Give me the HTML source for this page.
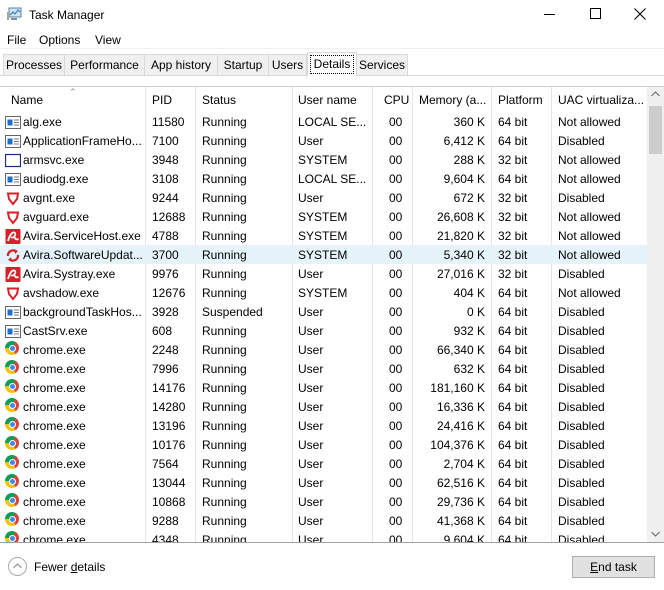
<!DOCTYPE html>
<html><head><meta charset="utf-8"><style>
*{margin:0;padding:0;box-sizing:border-box}
body{width:664px;height:590px;background:#fff;font-family:"Liberation Sans",sans-serif;font-size:12px;color:#000;position:relative;overflow:hidden}
.a{position:absolute;white-space:nowrap}
.tab{position:absolute;top:54px;height:21px;background:#f0f0f0;border:1px solid #d9d9d9;border-bottom:none;font-size:12px;line-height:20px;text-align:center}
.row{position:absolute;left:0;width:647px;height:19px;line-height:19px}
.row span{position:absolute;top:0}
.ic{position:absolute;left:5px;top:2px;width:16px;height:15px}
.vl{position:absolute;top:87px;width:1px;height:455px;background:#e5e5e5}
</style></head><body>
<svg class="a" style="left:6px;top:6px" width="16" height="16" viewBox="0 0 16 16"><rect x="3" y="2" width="12" height="9" fill="#cfe3f3" stroke="#5b7fa6"/><polyline points="4,9 7,6 9,8 12,4 14,6" fill="none" stroke="#2a6fb0"/><rect x="1" y="6" width="2" height="8" fill="#9aa"/><rect x="5" y="12" width="6" height="2" fill="#889"/></svg>
<div class="a" style="left:29px;top:8px;font-size:12px">Task Manager</div>
<div class="a" style="left:544px;top:14px;width:11px;height:1px;background:#000"></div>
<div class="a" style="left:590px;top:8px;width:11px;height:11px;border:1px solid #000"></div>
<svg class="a" style="left:634px;top:8px" width="12" height="12"><path d="M0.5 0.5L11.5 11.5M11.5 0.5L0.5 11.5" stroke="#000" stroke-width="1.1"/></svg>
<div class="a" style="left:7px;top:33px">File</div>
<div class="a" style="left:39px;top:33px">Options</div>
<div class="a" style="left:95px;top:33px">View</div>
<div class="a" style="left:0;top:48px;width:664px;height:1px;background:#f0f0f0"></div>
<div class="a" style="left:0;top:75px;width:664px;height:1px;background:#d9d9d9"></div>
<div class="tab" style="left:3px;width:62px">Processes</div>
<div class="tab" style="left:64px;width:81px">Performance</div>
<div class="tab" style="left:144px;width:74px">App history</div>
<div class="tab" style="left:217px;width:52px">Startup</div>
<div class="tab" style="left:268px;width:39px">Users</div>
<div class="tab" style="left:307px;top:52px;height:24px;width:50px;background:#fff"><div style="margin:2px 2px 0;border:1px dotted #000;line-height:17px">Details</div></div>
<div class="tab" style="left:356px;width:52px">Services</div>
<div class="a" style="left:0;top:86px;width:664px;height:1px;background:#d0d0d0"></div>
<div class="a" style="left:69px;top:87px;font-size:9px;color:#888">&#8963;</div>
<div class="a" style="left:11px;top:93px">Name</div>
<div class="a" style="left:152px;top:93px">PID</div>
<div class="a" style="left:202px;top:93px">Status</div>
<div class="a" style="left:298px;top:93px">User name</div>
<div class="a" style="left:384px;top:93px">CPU</div>
<div class="a" style="left:419px;top:93px">Memory (a...</div>
<div class="a" style="left:498px;top:93px">Platform</div>
<div class="a" style="left:558px;top:93px">UAC virtualiza...</div>
<div class="vl" style="left:145px"></div><div class="vl" style="left:195px"></div><div class="vl" style="left:292px"></div><div class="vl" style="left:372px"></div><div class="vl" style="left:412px"></div><div class="vl" style="left:491px"></div><div class="vl" style="left:551px"></div>
<div class="a" style="left:647px;top:87px;width:17px;height:455px;background:#f0f0f0"></div>
<div class="a" style="left:649px;top:106px;width:13px;height:48px;background:#cdcdcd"></div>
<svg class="a" style="left:651px;top:91px" width="9" height="6"><path d="M0.5 5L4.5 1L8.5 5" fill="none" stroke="#666"/></svg>
<svg class="a" style="left:651px;top:531px" width="9" height="6"><path d="M0.5 1L4.5 5L8.5 1" fill="none" stroke="#666"/></svg>
<div class="a" style="left:0;top:542px;width:664px;height:1px;background:#a0a0a0"></div>
<div class="a" style="left:0;top:245px;width:647px;height:19px;background:#e5f3fb"></div>
<div id="rows" class="a" style="left:0;top:0;width:647px;height:542px;overflow:hidden">
</div>
<div class="a" style="left:8px;top:557px;width:19px;height:19px;border:1px solid #aaa;border-radius:50%"></div>
<svg class="a" style="left:12px;top:561px" width="11" height="11"><path d="M1.5 7L5.5 3L9.5 7" fill="none" stroke="#888"/></svg>
<div class="a" style="left:34px;top:560px">Fewer <u>d</u>etails</div>
<div class="a" style="left:572px;top:556px;width:83px;height:22px;background:#e1e1e1;border:1px solid #adadad;text-align:center;line-height:20px"><u>E</u>nd task</div>
<script>
var I={
w:'<svg class="ic" viewBox="0 0 16 15"><rect x="0.5" y="1.5" width="15" height="12" fill="#fff" stroke="#666"/><rect x="2.5" y="4.5" width="5" height="6" fill="#1d6fd1"/><path d="M9 5h5M9 7.5h5M9 10h5" stroke="#777"/></svg>',
b:'<svg class="ic" viewBox="0 0 16 15"><rect x="0.5" y="1.5" width="15" height="12" fill="#fff" stroke="#1b2a7a" stroke-width="1.2"/></svg>',
s:'<svg class="ic" viewBox="0 0 16 15"><path d="M3 2.5L13 2.5L12 8L8 13L4 8Z" fill="#fff" stroke="#d8202a" stroke-width="2"/></svg>',
a:'<svg class="ic" viewBox="0 0 16 15"><rect x="0.5" y="0" width="15" height="15" rx="1" fill="#d8202a"/><path d="M3 12C5 5 8 2 10 4C11.5 6 8 10 6 8M9 7C10 10 11 11 13.5 10" fill="none" stroke="#fff" stroke-width="1.8"/></svg>',
u:'<svg class="ic" viewBox="0 0 16 15"><path d="M3 8A5 5 0 0 1 11 3.5M13 7A5 5 0 0 1 5 11.5" fill="none" stroke="#d8202a" stroke-width="2.2"/><path d="M9 1L13 3L10 6Z M7 14L3 12L6 9Z" fill="#d8202a"/></svg>',
c:'<span class="ic" style="width:14px;height:14px;border-radius:50%;background:conic-gradient(from 30deg,#db4437 0 120deg,#f4c20d 120deg 240deg,#0f9d58 240deg 360deg)"><span style="position:absolute;left:3.5px;top:3.5px;width:7px;height:7px;border-radius:50%;background:#4285f4;border:1.2px solid #fff"></span></span>'};
var R=[
['w','alg.exe','11580','Running','LOCAL SE...','360 K','64 bit','Not allowed'],
['w','ApplicationFrameHo...','7100','Running','User','6,412 K','64 bit','Disabled'],
['b','armsvc.exe','3948','Running','SYSTEM','288 K','32 bit','Not allowed'],
['w','audiodg.exe','3108','Running','LOCAL SE...','9,604 K','64 bit','Not allowed'],
['s','avgnt.exe','9244','Running','User','672 K','32 bit','Disabled'],
['s','avguard.exe','12688','Running','SYSTEM','26,608 K','32 bit','Not allowed'],
['a','Avira.ServiceHost.exe','4788','Running','SYSTEM','21,820 K','32 bit','Not allowed'],
['u','Avira.SoftwareUpdat...','3700','Running','SYSTEM','5,340 K','32 bit','Not allowed'],
['a','Avira.Systray.exe','9976','Running','User','27,016 K','32 bit','Disabled'],
['s','avshadow.exe','12676','Running','SYSTEM','404 K','64 bit','Not allowed'],
['w','backgroundTaskHos...','3928','Suspended','User','0 K','64 bit','Disabled'],
['w','CastSrv.exe','608','Running','User','932 K','64 bit','Disabled'],
['c','chrome.exe','2248','Running','User','66,340 K','64 bit','Disabled'],
['c','chrome.exe','7996','Running','User','632 K','64 bit','Disabled'],
['c','chrome.exe','14176','Running','User','181,160 K','64 bit','Disabled'],
['c','chrome.exe','14280','Running','User','16,336 K','64 bit','Disabled'],
['c','chrome.exe','13196','Running','User','24,416 K','64 bit','Disabled'],
['c','chrome.exe','10176','Running','User','104,376 K','64 bit','Disabled'],
['c','chrome.exe','7564','Running','User','2,704 K','64 bit','Disabled'],
['c','chrome.exe','13044','Running','User','62,516 K','64 bit','Disabled'],
['c','chrome.exe','10868','Running','User','29,736 K','64 bit','Disabled'],
['c','chrome.exe','9288','Running','User','41,368 K','64 bit','Disabled'],
['c','chrome.exe','4348','Running','User','9,604 K','64 bit','Disabled']];
var h='';
R.forEach(function(r,i){h+='<div class="row" style="top:'+(113+19*i)+'px">'+I[r[0]]+'<span style="left:23px">'+r[1]+'</span><span style="left:152px">'+r[2]+'</span><span style="left:202px">'+r[3]+'</span><span style="left:298px">'+r[4]+'</span><span style="left:389px">00</span><span style="right:162px">'+r[5]+'</span><span style="left:498px">'+r[6]+'</span><span style="left:558px">'+r[7]+'</span></div>';});
document.getElementById('rows').innerHTML=h;
</script>
</body></html>
